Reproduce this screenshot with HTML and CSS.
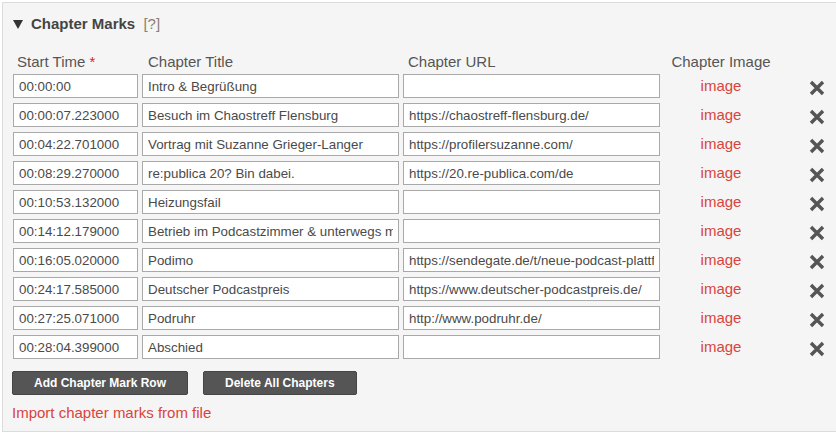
FILE: index.html
```html
<!DOCTYPE html>
<html lang="de">
<head>
<meta charset="utf-8">
<title>Chapter Marks</title>
<link rel="stylesheet" href="styles.css">
</head>
<body>
<section class="panel">
  <h3 class="panel-title"><span class="toggle"></span>Chapter Marks <span class="help">[?]</span></h3>

  <div class="chapters">
    <div class="col-head">Start Time <span class="req">*</span></div>
    <div class="col-head">Chapter Title</div>
    <div class="col-head">Chapter URL</div>
    <div class="col-head center">Chapter Image</div>
    <div class="col-head"></div>

    <input class="field" type="text" value="00:00:00">
    <input class="field" type="text" value="Intro &amp; Begrüßung">
    <input class="field" type="text" value="">
    <a class="image-link" href="#">image</a>
    <span class="remove"><svg viewBox="0 0 16 16"><path d="M2 2L14 14M14 2L2 14"/></svg></span>

    <input class="field" type="text" value="00:00:07.223000">
    <input class="field" type="text" value="Besuch im Chaostreff Flensburg">
    <input class="field" type="text" value="https://chaostreff-flensburg.de/">
    <a class="image-link" href="#">image</a>
    <span class="remove"><svg viewBox="0 0 16 16"><path d="M2 2L14 14M14 2L2 14"/></svg></span>

    <input class="field" type="text" value="00:04:22.701000">
    <input class="field" type="text" value="Vortrag mit Suzanne Grieger-Langer">
    <input class="field" type="text" value="https://profilersuzanne.com/">
    <a class="image-link" href="#">image</a>
    <span class="remove"><svg viewBox="0 0 16 16"><path d="M2 2L14 14M14 2L2 14"/></svg></span>

    <input class="field" type="text" value="00:08:29.270000">
    <input class="field" type="text" value="re:publica 20? Bin dabei.">
    <input class="field" type="text" value="https://20.re-publica.com/de">
    <a class="image-link" href="#">image</a>
    <span class="remove"><svg viewBox="0 0 16 16"><path d="M2 2L14 14M14 2L2 14"/></svg></span>

    <input class="field" type="text" value="00:10:53.132000">
    <input class="field" type="text" value="Heizungsfail">
    <input class="field" type="text" value="">
    <a class="image-link" href="#">image</a>
    <span class="remove"><svg viewBox="0 0 16 16"><path d="M2 2L14 14M14 2L2 14"/></svg></span>

    <input class="field" type="text" value="00:14:12.179000">
    <input class="field" type="text" value="Betrieb im Podcastzimmer &amp; unterwegs mit dem Rad">
    <input class="field" type="text" value="">
    <a class="image-link" href="#">image</a>
    <span class="remove"><svg viewBox="0 0 16 16"><path d="M2 2L14 14M14 2L2 14"/></svg></span>

    <input class="field" type="text" value="00:16:05.020000">
    <input class="field" type="text" value="Podimo">
    <input class="field" type="text" value="https://sendegate.de/t/neue-podcast-plattform-podimo">
    <a class="image-link" href="#">image</a>
    <span class="remove"><svg viewBox="0 0 16 16"><path d="M2 2L14 14M14 2L2 14"/></svg></span>

    <input class="field" type="text" value="00:24:17.585000">
    <input class="field" type="text" value="Deutscher Podcastpreis">
    <input class="field" type="text" value="https://www.deutscher-podcastpreis.de/">
    <a class="image-link" href="#">image</a>
    <span class="remove"><svg viewBox="0 0 16 16"><path d="M2 2L14 14M14 2L2 14"/></svg></span>

    <input class="field" type="text" value="00:27:25.071000">
    <input class="field" type="text" value="Podruhr">
    <input class="field" type="text" value="http://www.podruhr.de/">
    <a class="image-link" href="#">image</a>
    <span class="remove"><svg viewBox="0 0 16 16"><path d="M2 2L14 14M14 2L2 14"/></svg></span>

    <input class="field" type="text" value="00:28:04.399000">
    <input class="field" type="text" value="Abschied">
    <input class="field" type="text" value="">
    <a class="image-link" href="#">image</a>
    <span class="remove"><svg viewBox="0 0 16 16"><path d="M2 2L14 14M14 2L2 14"/></svg></span>
  </div>

  <div class="actions">
    <button class="btn" type="button">Add Chapter Mark Row</button>
    <button class="btn" type="button">Delete All Chapters</button>
  </div>

  <a class="import-link" href="#">Import chapter marks from file</a>
</section>
</body>
</html>
```

FILE: styles.css
```css
html, body {
  margin: 0;
  background: #ffffff;
  font-family: "Liberation Sans", Arial, sans-serif;
  color: #555555;
}

.panel {
  box-sizing: border-box;
  margin: 2px 0 0 2px;
  height: 430px;
  border: 1px solid #dcdcdc;
  border-right: none;
  background: #f5f5f5;
  padding: 0 0 0 10px;
}

.panel-title {
  display: flex;
  align-items: center;
  margin: 12px 0 0 0;
  font-size: 15px;
  line-height: 18px;
  font-weight: bold;
  color: #444444;
  white-space: pre;
}

/* collapse arrow, pointing down */
.toggle {
  width: 0;
  height: 0;
  border-left: 5px solid transparent;
  border-right: 5px solid transparent;
  border-top: 9px solid #333333;
  margin: 1px 8px 0 0;
}

.help {
  margin-left: 4px;
  font-weight: normal;
  color: #8a7f74;
}

.chapters {
  display: grid;
  grid-template-columns: 125px 257px 257px 114px auto;
  grid-template-rows: 16px;
  grid-auto-rows: 24px;
  column-gap: 4px;
  row-gap: 5px;
  margin-top: 20px;
}

.col-head {
  font-size: 15px;
  line-height: 18px;
  padding-left: 4px;
  color: #555555;
  white-space: nowrap;
}

.chapters .col-head:nth-child(2) { padding-left: 6px; }
.chapters .col-head:nth-child(3) { padding-left: 5px; }

.col-head.center {
  padding-left: 0;
  text-align: center;
}

.req {
  color: #e21b1b;
}

.field {
  box-sizing: border-box;
  height: 24px;
  margin: 0;
  padding: 0 5px;
  border: 1px solid #a9a9a9;
  border-radius: 0;
  background: #ffffff;
  font-family: "Liberation Sans", Arial, sans-serif;
  font-size: 13.333px;
  color: #4a4a4a;
  outline: none;
}

.image-link {
  align-self: center;
  text-align: center;
  font-size: 15px;
  line-height: 18px;
  color: #d9443c;
  text-decoration: none;
}

.remove {
  display: block;
  margin: 6px 0 0 27px;
  width: 16px;
  height: 16px;
}

.remove svg {
  display: block;
  width: 16px;
  height: 16px;
  fill: none;
  stroke: #555555;
  stroke-width: 3.4;
}

.actions {
  display: flex;
  gap: 15px;
  margin: 12px 0 0 -1px;
}

.btn {
  box-sizing: border-box;
  height: 24px;
  padding: 0 21px;
  border: 1px solid #444444;
  border-radius: 2px;
  background: #555555;
  color: #ffffff;
  font-family: "Liberation Sans", Arial, sans-serif;
  font-size: 12px;
  font-weight: bold;
}

.import-link {
  display: block;
  margin: 9px 0 0 -1px;
  font-size: 15px;
  line-height: 18px;
  color: #d9443c;
  text-decoration: none;
}
```
